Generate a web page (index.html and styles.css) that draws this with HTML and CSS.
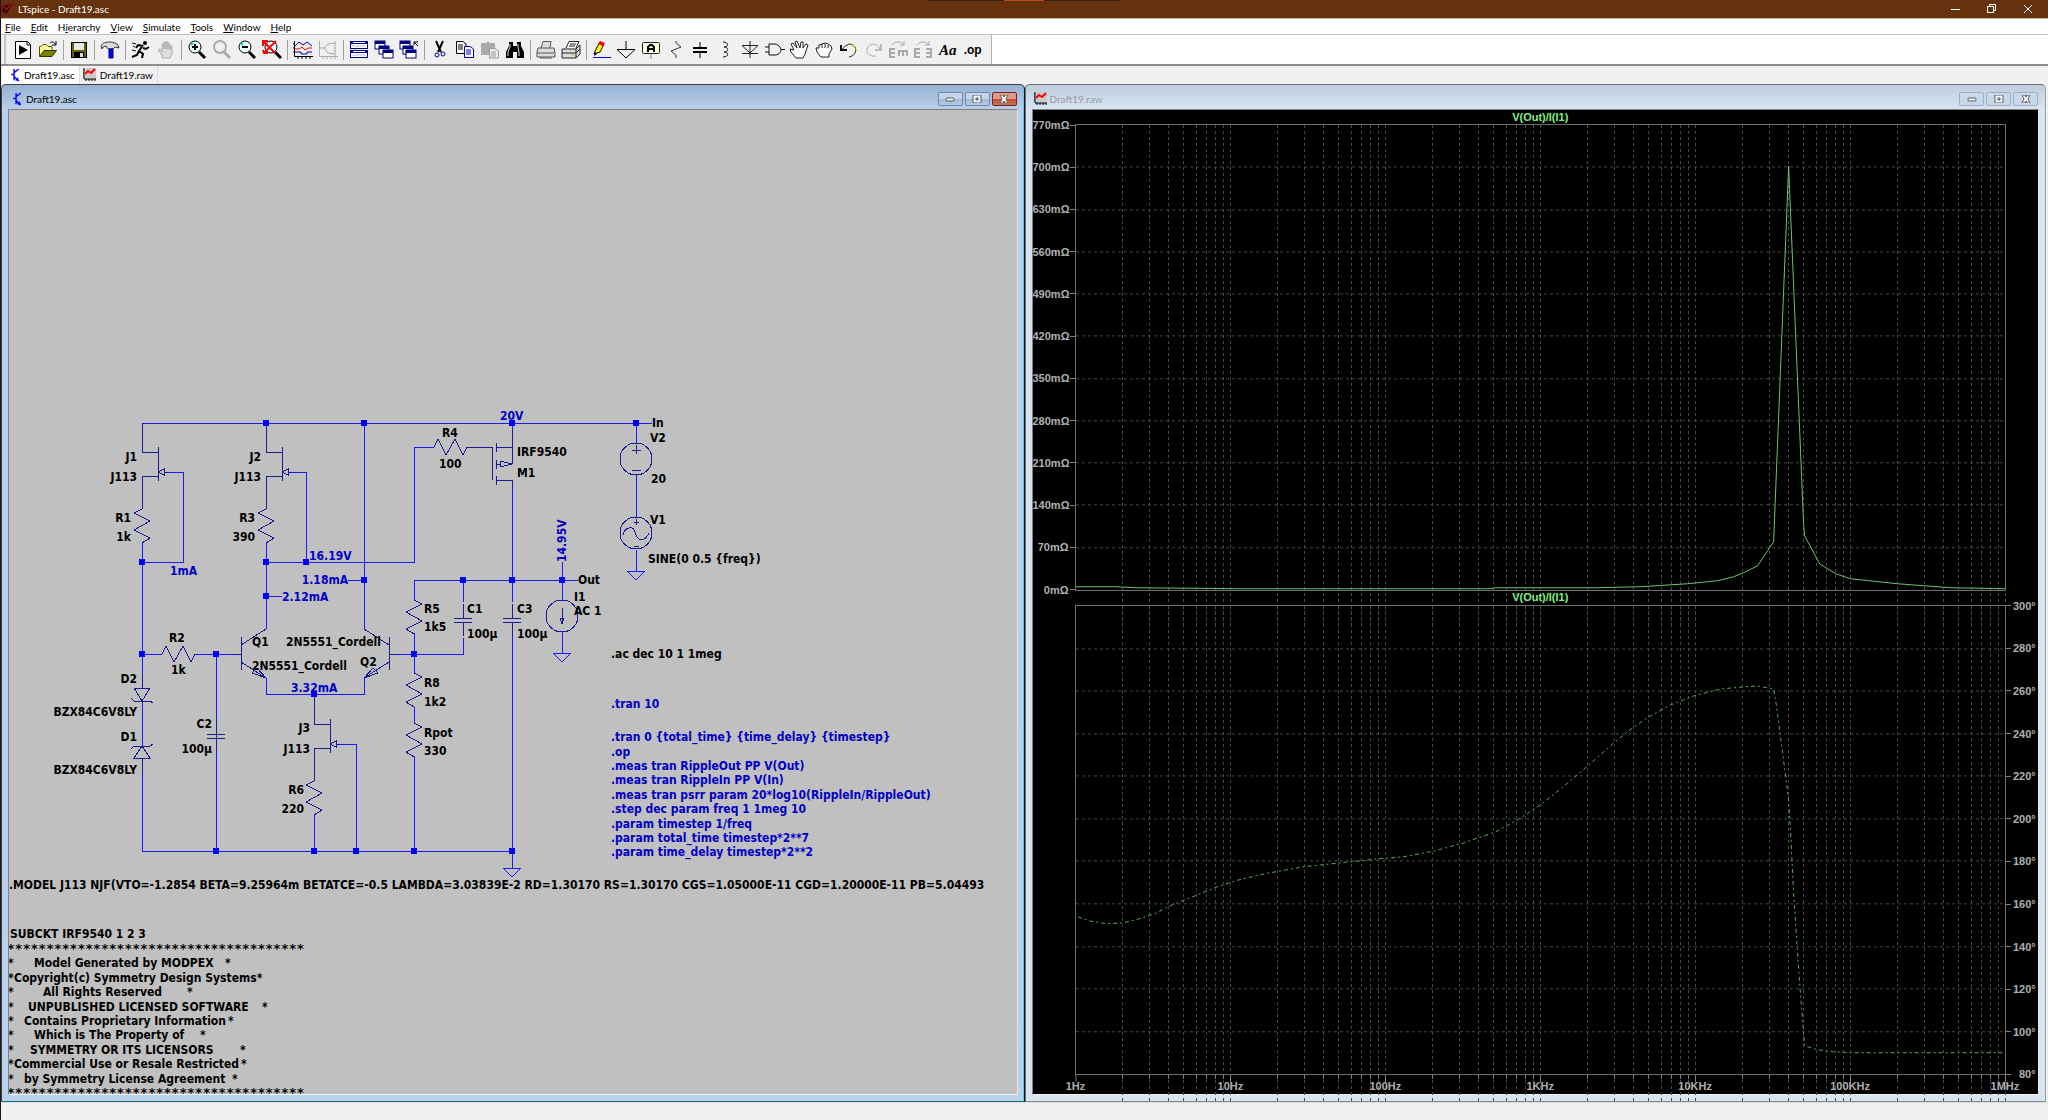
FILE: index.html
```html
<!DOCTYPE html>
<html lang="en">
<head>
<meta charset="utf-8">
<title>LTspice - Draft19.asc</title>
<link rel="stylesheet" href="styles.css">
</head>
<body>
<svg class="defs" aria-hidden="true">
  <defs>
    <path id="zig" d="M0 0L-8 4L8 12L-8 21L8 29L0 34"/>
    <path id="zig-r" d="M0 0L8 4L-8 12L8 21L-8 29L0 34"/>
    <path id="zig-h" d="M0 0L4 -8L12 8L21 -8L29 8L33 0"/>
    <path id="jfet" d="M0 0V29H16M16 24V58M0 86V53H16M16 49L22 46V52ZM22 49H25"/>
    <path id="gnd" d="M-9 0H9L0 9Z"/>
    <path id="cap" d="M-9 -2H9M-9 2H9M0 -16V-2M0 2V16"/>
    <rect id="dot" x="-3" y="-3" width="6" height="6"/>
    <path id="decade" d="M47 0V500M74 0V500M93 0V500M108 0V500M121 0V500M131 0V500M140 0V500M148 0V500M155 0V500"/>
    <path id="ticks" d="M47 0V4M74 0V4M93 0V4M108 0V4M121 0V4M131 0V4M140 0V4M148 0V4M155 0V7"/>
    <g id="bjt"><path d="M3 0V12M0 6H3M3 4L8 0M3 8L8 13" fill="none" stroke="#00f" stroke-width="1.500"/><path d="M8 13L4 12L7 9Z" fill="#00f"/></g>
    <g id="wave"><rect x="2" y="0" width="11" height="10" fill="#ccc"/><path d="M1 0V11H13M0 2H1M0 5H1M0 8H1M3 11V13M6 11V13M9 11V13M12 11V13" stroke="#000" fill="none"/><path d="M2 6L5 3L8 5L12 1" stroke="#f00" fill="none" stroke-width="2"/></g>
    <g id="winbox"><rect x="0" y="0" width="10" height="8" fill="#fff" stroke="#000080"/><rect x="0" y="0" width="10" height="3" fill="#000080"/></g>
  </defs>
</svg>

<header class="titlebar">
  <svg class="app-icon" width="14" height="14" viewBox="0 0 14 14"><path d="M1 4L12 1L6 12L1 10Z" fill="#2a0805" stroke="#8a1410"/><path d="M2 5L6 7L9 3M4 9L10 2" stroke="#d01818" fill="none"/></svg>
  <h1>LTspice - Draft19.asc</h1>
  <div class="caption-buttons">
    <button aria-label="Minimize"><svg width="10" height="10" viewBox="0 0 10 10"><path d="M0 5.500H9"/></svg></button>
    <button aria-label="Restore"><svg width="10" height="10" viewBox="0 0 10 10"><path d="M.5 2.500H6.500V8.500H.5ZM2.500 2.500V.5H8.500V6.500H6.500"/></svg></button>
    <button aria-label="Close"><svg width="10" height="10" viewBox="0 0 10 10"><path d="M1 1L9 9M9 1L1 9"/></svg></button>
  </div>
</header>

<nav class="menubar" aria-label="Main menu">
  <button><u>F</u>ile</button><button><u>E</u>dit</button><button>H<u>i</u>erarchy</button><button><u>V</u>iew</button><button><u>S</u>imulate</button><button><u>T</u>ools</button><button><u>W</u>indow</button><button><u>H</u>elp</button>
</nav>

<div class="toolrow">
<div class="toolbar" role="toolbar" aria-label="Tools">
  <div class="group">
    <button aria-label="New schematic"><svg viewBox="0 0 20 20"><path d="M2.500 1.500H14.500L17.500 4.500V18.500H2.500Z" fill="#fff" stroke="#000"/><path d="M14 2V5H17" fill="none" stroke="#000"/><path d="M6 5L15 10L6 15Z"/></svg></button>
    <button aria-label="Open"><svg viewBox="0 0 20 20"><path d="M1.500 16V6.500H3L5 4.500H8L10 6.500H14V10" fill="#ff9" stroke="#550"/><path d="M1.500 16.500L6 10.500H18.500L14 16.500Z" fill="#808000" stroke="#330"/><path d="M12 3C14 1 16 2 18 5M18 1V5H14" fill="none" stroke="#000"/></svg></button>
  </div>
  <div class="group">
    <button aria-label="Save"><svg viewBox="0 0 20 20"><rect x="2.500" y="2.500" width="15" height="15" fill="#666600" stroke="#000"/><rect x="5" y="3" width="10" height="7" fill="#e8e8e8"/><rect x="5" y="12" width="10" height="6"/><rect x="11" y="13" width="3" height="4" fill="#ddd"/></svg></button>
  </div>
  <div class="group">
    <button aria-label="Control panel"><svg viewBox="0 0 20 20"><path d="M1 6C3 2 9 1 15 3L18 5L19 8L15 7L13 9H8L6 6L3 7L2 9Z" fill="#ddd" stroke="#333"/><path d="M9 9H13V18H9Z" fill="#00f" stroke="#007"/></svg></button>
  </div>
  <div class="group">
    <button aria-label="Run"><svg viewBox="0 0 20 20"><circle cx="14" cy="3" r="2"/><path d="M12 5L8 11L12 14L11 18M8 11L6 15L1 17M12 6L7 5L5 8M12 8L15 9L18 7" fill="none" stroke="#000" stroke-width="2"/><path d="M1 3L5 4M2 6L4 7M1 10L5 11" stroke="#000"/></svg></button>
    <button aria-label="Halt"><svg viewBox="0 0 20 20"><path d="M6 18V15L2 10L4 9L6 12V4H8V9V2H10V9V2H12V9V4H14V10V6H16V14L14 18Z" fill="#ddd" stroke="#aaa"/></svg></button>
  </div>
  <div class="group">
    <button aria-label="Zoom in"><svg viewBox="0 0 20 20"><circle cx="8" cy="7" r="6" fill="#eff" stroke="#000"/><path d="M4 5L6 3" stroke="#0cc" stroke-width="2"/><path d="M8 4V10M5 7H11" stroke="#000" stroke-width="2"/><path d="M12 12L18 18" stroke="#000" stroke-width="3"/></svg></button>
    <button aria-label="Pan"><svg viewBox="0 0 20 20"><circle cx="8" cy="7" r="6" fill="#eee" stroke="#aaa" stroke-width="2"/><path d="M12 12L18 18" stroke="#aaa" stroke-width="3"/></svg></button>
    <button aria-label="Zoom back"><svg viewBox="0 0 20 20"><circle cx="8" cy="7" r="6" fill="#eff" stroke="#000"/><path d="M4 5L6 3" stroke="#0cc" stroke-width="2"/><path d="M5 7H11" stroke="#000" stroke-width="2"/><path d="M12 12L18 18" stroke="#000" stroke-width="3"/></svg></button>
    <button aria-label="Zoom full extents"><svg viewBox="0 0 20 20"><circle cx="9" cy="7" r="6" fill="#dff" stroke="#000"/><path d="M13 12L19 18" stroke="#000" stroke-width="3"/><path d="M1 1L13 13M14 1L2 13M1 6V1H6M1 10L2 13L6 13" fill="none" stroke="#f00" stroke-width="2"/></svg></button>
  </div>
  <div class="group">
    <button aria-label="Autorange"><svg viewBox="0 0 20 20"><path d="M1.500 1V16.500H20M0 4H1M0 8H1M0 12H1M5 17V19M9 17V19M13 17V19M17 17V19" stroke="#000" fill="none"/><path d="M2 6L6 2L10 5L14 2L19 6" stroke="#00a" fill="none"/><path d="M2 9H6L9 7L12 10L15 8H19" stroke="#f00" fill="none"/><path d="M2 12H8V14H14V12H19" stroke="#00a" fill="none"/></svg></button>
    <button aria-label="Pick visible traces"><svg viewBox="0 0 20 20"><path d="M1.500 1V16.500H20M5 17V19M9 17V19M13 17V19M17 17V19M17 1V16M17 3L10 4L6 8L10 13L17 14M2 8H7" stroke="#aaa" fill="none"/></svg></button>
  </div>
  <div class="group">
    <button aria-label="Tile windows"><svg viewBox="0 0 20 20"><path d="M1 1H19V9H1ZM1 10H19V18H1Z" fill="#000080"/><path d="M4 2H16V3H4ZM4 11H16V12H4ZM2 4H18V8H2ZM2 13H18V17H2Z" fill="#fff"/><path d="M3 5H17V7H3ZM3 14H17V16H3Z" fill="#dde"/></svg></button>
    <button aria-label="Cascade windows"><svg viewBox="0 0 20 20"><use href="#winbox" x="1" y="1"/><use href="#winbox" x="5" y="6"/><use href="#winbox" x="9" y="10"/></svg></button>
    <button aria-label="Close all windows"><svg viewBox="0 0 20 20"><use href="#winbox" x="1" y="1"/><use href="#winbox" x="4" y="6"/><use href="#winbox" x="7" y="10"/><path d="M19 6L15 2M15 5V2H19" stroke="#000" fill="none"/></svg></button>
  </div>
  <div class="group">
    <button aria-label="Cut"><svg viewBox="0 0 20 20"><path d="M6 1L11 12M13 1L8 12" stroke="#000" stroke-width="2"/><circle cx="7" cy="15" r="2" fill="none" stroke="#00a"/><circle cx="13" cy="14" r="2" fill="none" stroke="#00a"/></svg></button>
    <button aria-label="Copy"><svg viewBox="0 0 20 20"><path d="M1.500 1.500H8L11 4V13.500H1.500Z" fill="#fff" stroke="#000"/><path d="M3 5H8M3 7H8M3 9H8" stroke="#000"/><path d="M9.500 6.500H15L18.500 9V17.500H9.500Z" fill="#fff" stroke="#00a"/><path d="M11 10H16M11 12H16M11 14H16" stroke="#00a"/></svg></button>
    <button aria-label="Paste"><svg viewBox="0 0 20 20"><path d="M1 3H6L8 1L10 3H15V15H1Z" fill="#aaa"/><path d="M9.500 8.500H15L18.500 11V18H9.500Z" fill="#eee" stroke="#999"/><path d="M11 12H16M11 14H16M11 16H16" stroke="#999"/></svg></button>
    <button aria-label="Find"><svg viewBox="0 0 20 20"><path d="M4 2H8V6H12V2H16V6L19 12V18H12V12H8V18H1V12L4 6Z"/><path d="M5 4V7L3 12V16M13 4V7L14 12V16" stroke="#ddd" fill="none"/></svg></button>
  </div>
  <div class="group">
    <button aria-label="Print"><svg viewBox="0 0 20 20"><path d="M5 8L7 1.500H15L14 8M2 8H18L19 13V17H1V12Z" fill="#ddd" stroke="#555"/><path d="M1 13H18M4 17V18H16" stroke="#555" fill="none"/></svg></button>
    <button aria-label="Print preview"><svg viewBox="0 0 20 20"><path d="M5 8L8 1.500H18L15 8" fill="#fff" stroke="#222"/><path d="M9 4H15M8 6H14" stroke="#222"/><path d="M1 9H15L19 5V14L15 18H1Z" fill="#ddd" stroke="#222"/><path d="M1 13H15V18M15 13L19 9M15 9V13" stroke="#222" fill="none"/><path d="M10 15H13" stroke="#cc0"/></svg></button>
  </div>
  <div class="group edit">
    <button aria-label="Draw wire"><svg viewBox="0 0 20 20"><path d="M3 14L5 9L9 2L13 4L9 12Z" fill="#ff0" stroke="#000"/><path d="M9 1L14 3L12 6L7 4Z" fill="#f00"/><path d="M3 16L4 12L6 14Z"/><path d="M2 17.500H20" stroke="#00f"/></svg></button>
    <button aria-label="Ground"><svg viewBox="0 0 20 20"><path d="M10 1V9M1 9.500H19L10 18Z" fill="none" stroke="#000"/></svg></button>
    <button aria-label="Label net"><svg viewBox="0 0 20 20"><rect x="1.500" y="2.500" width="17" height="11" rx="1" fill="#ffd" stroke="#222"/><path d="M10 14V19" stroke="#888"/><path d="M7 12V7L9 5H11L13 7V12M7 9H13" fill="none" stroke="#000" stroke-width="2"/></svg></button>
    <button aria-label="Resistor"><svg viewBox="0 0 20 20"><path d="M10 1V3L15 7L5 11L10 15V18" fill="none" stroke="#333"/></svg></button>
    <button aria-label="Capacitor"><svg viewBox="0 0 20 20"><path d="M10 2V8M10 12V18" stroke="#000"/><path d="M3 8H17M3 12H17" fill="none" stroke="#000" stroke-width="2"/></svg></button>
    <button aria-label="Inductor"><svg viewBox="0 0 20 20"><path d="M8 2C14 2 14 7 9 7C14 7 14 12 9 12C14 12 14 17 8 17" fill="none" stroke="#111"/></svg></button>
    <button aria-label="Diode"><svg viewBox="0 0 20 20"><path d="M10 1V18M2 5.500H18L10 13ZM2 13.500H18" fill="none" stroke="#222"/></svg></button>
    <button aria-label="Component"><svg viewBox="0 0 20 20"><path d="M4 4H10C15 5 16 9 16 10C16 11 15 15 10 15H4ZM0 7H4M0 12H4M16 9.500H20" fill="none" stroke="#111"/></svg></button>
    <button aria-label="Move"><svg viewBox="0 0 20 20"><path d="M7 18L2 12L1 9L5 10L2 4L4 3L8 8L6 2L8 1L11 8L12 2L14 2L14 8L17 4L19 5L16 14L14 18Z" fill="#fff" stroke="#222"/></svg></button>
    <button aria-label="Drag"><svg viewBox="0 0 20 20"><path d="M7 17L3 12L2 8L5 8V5L8 4L11 3L14 4L17 6L18 9L15 14V17Z" fill="#fff" stroke="#222"/><path d="M8 4V8M11 4V8M14 5V8" stroke="#222"/></svg></button>
    <button aria-label="Undo"><svg viewBox="0 0 20 20"><path d="M3 10C7 3 13 3 16 7C18 12 15 16 10 17" fill="none" stroke="#222"/><path d="M9 4C14 3 17 7 17 11" fill="none" stroke="#aa0"/><path d="M2 5V10H8" fill="none" stroke="#111" stroke-width="2"/></svg></button>
    <button aria-label="Redo"><svg viewBox="0 0 20 20"><path d="M16 9C12 2 5 3 3 9C2 13 6 17 12 16" fill="none" stroke="#aaa"/><path d="M17 4V10H11" fill="none" stroke="#bbb" stroke-width="2"/></svg></button>
    <button aria-label="Rotate"><svg viewBox="0 0 20 20"><path d="M4 5C7 1 13 1 16 5M16 1V5H12" fill="none" stroke="#aaa"/><path d="M7 9H2V17H7M2 13H7M11 16V11H19V16M15 11V16" fill="none" stroke="#aaa" stroke-width="2"/></svg></button>
    <button aria-label="Mirror"><svg viewBox="0 0 20 20"><path d="M4 5C7 1 13 1 16 5M16 1V5H12" fill="none" stroke="#aaa"/><path d="M7 9H2V17H7M2 13H7M13 9H18V17H13M18 13H13" fill="none" stroke="#aaa" stroke-width="2"/></svg></button>
    <button class="text-tool serif" aria-label="Text">Aa</button>
    <button class="text-tool" aria-label="SPICE directive">.op</button>
  </div>
</div>
</div>

<div class="tabs" role="tablist">
  <button role="tab" aria-selected="true" class="active"><svg width="14" height="14" viewBox="-2 -1 12 15"><use href="#bjt"/></svg>Draft19.asc</button>
  <button role="tab" aria-selected="false"><svg width="14" height="14" viewBox="0 0 14 14"><use href="#wave"/></svg>Draft19.raw</button>
</div>

<main class="mdi">
  <section class="window front">
    <header>
      <svg width="14" height="14" viewBox="-2 -1 12 15"><use href="#bjt"/></svg>
      <h2>Draft19.asc</h2>
      <button aria-label="Minimize"><svg width="10" height="8" viewBox="0 0 10 8"><rect x="1" y="3" width="8" height="3" rx="1"/></svg></button>
      <button aria-label="Maximize"><svg width="10" height="8" viewBox="0 0 10 8"><path d="M1 0H9V8H1ZM4 3V5H6V3Z" fill-rule="evenodd"/></svg></button>
      <button class="close" aria-label="Close"><svg width="10" height="8" viewBox="0 0 10 8"><path d="M1 0H4L5 2L6 0H9L7 4L9 8H6L5 6L4 8H1L3 4Z"/></svg></button>
    </header>
    <div class="client schematic">
      <svg width="100%" height="100%" role="img" aria-label="Schematic">
        <g transform="translate(-9 -110)">
          <g class="wire">
            <path d="M142 423H652M142 423V441M266 423V441M364 423V629M512 423V441M636 423V443"/>
            <path d="M142 543V683M183 472V562H142M164 472H183M266 543V629M288 472H306V562M266 562H414V447H434M266 596H282M348 580H364"/>
            <path d="M142 654H162M195 654H233M216 654V851M142 701V746M142 767V851H512M266 678V694H364V678M314 694V705M339 744H356V851M314 814V851"/>
            <path d="M397 654H463V638M414 633V673M414 707V723M414 756V851M414 600V580H578M463 580V602M512 488V602M512 636V868M562 562V600M562 632V653M636 475V517M636 550V571"/>
            <use href="#gnd" x="512" y="868"/><use href="#gnd" x="562" y="653"/><use href="#gnd" x="636" y="571"/>
          </g>
          <g class="part">
            <use href="#jfet" x="142" y="423"/><use href="#jfet" x="266" y="423"/><use href="#jfet" x="314" y="695"/>
            <use href="#zig" x="142" y="509"/><use href="#zig" x="266" y="509"/><use href="#zig" x="314" y="781"/>
            <use href="#zig-r" x="414" y="600"/><use href="#zig-r" x="414" y="673"/><use href="#zig-r" x="414" y="723"/>
            <use href="#zig-h" x="162" y="654"/><use href="#zig-h" x="434" y="447"/>
            <use href="#cap" x="216" y="736"/><use href="#cap" x="463" y="620"/><use href="#cap" x="512" y="620"/>
            <path d="M467 447H492V480M496 443V452M496 460V469M496 476V485M496 447H512V430M512 447V464M512 464L500 461V467ZM500 464H496M496 480H512V488"/>
            <path d="M233 654H241M241 637V670M241 645L266 629M241 662L266 678M266 678L252 673L257 668Z"/>
            <path d="M397 654H389M389 637V670M389 645L364 629M389 662L364 678M364 678L378 673L373 668Z"/>
            <path d="M142 675V688M134 688H150L142 701ZM131 698L134 701H150L153 703M142 771V758M134 758H150L142 746ZM131 749L134 746H150L153 744"/>
            <circle cx="636" cy="459" r="16"/><circle cx="636" cy="533" r="16"/><circle cx="562" cy="616" r="16"/>
            <path d="M632 450H641M636 445V454M632 470H641M634 522H639M636 519V525M634 546H639"/>
            <path d="M623 535C625 527 633 525 635 532C637 541 644 543 649 533"/>
            <path d="M562 608V624M560 618H564L562 624Z"/>
          </g>
          <g class="dots">
            <use href="#dot" x="266" y="423"/><use href="#dot" x="364" y="423"/><use href="#dot" x="512" y="423"/><use href="#dot" x="636" y="423"/>
            <use href="#dot" x="142" y="562"/><use href="#dot" x="266" y="562"/><use href="#dot" x="306" y="562"/><use href="#dot" x="364" y="580"/><use href="#dot" x="266" y="596"/>
            <use href="#dot" x="142" y="654"/><use href="#dot" x="216" y="654"/><use href="#dot" x="414" y="654"/>
            <use href="#dot" x="463" y="580"/><use href="#dot" x="512" y="580"/><use href="#dot" x="562" y="580"/><use href="#dot" x="314" y="694"/>
            <use href="#dot" x="216" y="851"/><use href="#dot" x="314" y="851"/><use href="#dot" x="356" y="851"/><use href="#dot" x="414" y="851"/><use href="#dot" x="512" y="851"/>
          </g>
          <g class="end">
            <text x="137" y="461">J1</text><text x="137" y="481">J113</text><text x="131" y="522">R1</text><text x="131" y="541">1k</text>
            <text x="261" y="461">J2</text><text x="261" y="481">J113</text><text x="255" y="522">R3</text><text x="255" y="541">390</text>
            <text x="137" y="683">D2</text><text x="137" y="716">BZX84C6V8LY</text><text x="137" y="741">D1</text><text x="137" y="774">BZX84C6V8LY</text>
            <text x="212" y="728">C2</text><text x="212" y="753">100µ</text><text x="310" y="732">J3</text><text x="310" y="753">J113</text>
            <text x="304" y="794">R6</text><text x="304" y="813">220</text>
            <text x="381" y="646">2N5551_Cordell</text><text x="347" y="670">2N5551_Cordell</text>
            <text class="note" x="348" y="584">1.18mA</text>
          </g>
          <g>
            <text x="252" y="646">Q1</text><text x="360" y="666">Q2</text><text x="169" y="642">R2</text><text x="171" y="674">1k</text>
            <text x="442" y="437">R4</text><text x="439" y="468">100</text><text x="517" y="456">IRF9540</text><text x="517" y="477">M1</text>
            <text x="652" y="427">In</text><text x="650" y="442">V2</text><text x="651" y="483">20</text><text x="650" y="524">V1</text><text x="648" y="563">SINE(0 0.5 {freq})</text>
            <text x="578" y="584">Out</text><text x="574" y="601">I1</text><text x="574" y="615">AC 1</text>
            <text x="424" y="613">R5</text><text x="424" y="631">1k5</text><text x="467" y="613">C1</text><text x="467" y="638">100µ</text><text x="517" y="613">C3</text><text x="517" y="638">100µ</text>
            <text x="424" y="687">R8</text><text x="424" y="706">1k2</text><text x="424" y="737">Rpot</text><text x="424" y="755">330</text>
            <text x="611" y="658">.ac dec 10 1 1meg</text>
          </g>
          <g class="note">
            <text x="170" y="575">1mA</text><text x="309" y="560">16.19V</text><text x="282" y="601">2.12mA</text><text x="291" y="692">3.32mA</text><text x="500" y="420">20V</text>
            <text transform="translate(566 562) rotate(-90)">14.95V</text>
            <text x="611" y="708">.tran 10</text>
            <text x="611" y="741">.tran 0 {total_time} {time_delay} {timestep}</text>
            <text x="611" y="756">.op</text>
            <text x="611" y="770">.meas tran RippleOut PP V(Out)</text>
            <text x="611" y="784">.meas tran RippleIn PP V(In)</text>
            <text x="611" y="799">.meas tran psrr param 20*log10(RippleIn/RippleOut)</text>
            <text x="611" y="813">.step dec param freq 1 1meg 10</text>
            <text x="611" y="828">.param timestep 1/freq</text>
            <text x="611" y="842">.param total_time timestep*2**7</text>
            <text x="611" y="856">.param time_delay timestep*2**2</text>
          </g>
          <g>
            <text x="9" y="889">.MODEL J113 NJF(VTO=-1.2854 BETA=9.25964m BETATCE=-0.5 LAMBDA=3.03839E-2 RD=1.30170 RS=1.30170 CGS=1.05000E-11 CGD=1.20000E-11 PB=5.04493</text>
            <text x="10" y="938">SUBCKT IRF9540 1 2 3</text>
            <text class="rule" x="7" y="953">**************************************</text>
            <text x="8" y="967">*<tspan x="34">Model Generated by MODPEX</tspan><tspan x="225">*</tspan></text>
            <text x="8" y="982">*<tspan x="14">Copyright(c) Symmetry Design Systems*</tspan></text>
            <text x="8" y="996">*<tspan x="43">All Rights Reserved</tspan><tspan x="187">*</tspan></text>
            <text x="8" y="1011">*<tspan x="28">UNPUBLISHED LICENSED SOFTWARE</tspan><tspan x="262">*</tspan></text>
            <text x="8" y="1025">*<tspan x="24">Contains Proprietary Information</tspan><tspan x="228">*</tspan></text>
            <text x="8" y="1039">*<tspan x="34">Which is The Property of</tspan><tspan x="200">*</tspan></text>
            <text x="8" y="1054">*<tspan x="30">SYMMETRY OR ITS LICENSORS</tspan><tspan x="240">*</tspan></text>
            <text x="8" y="1068">*<tspan x="14">Commercial Use or Resale Restricted</tspan><tspan x="241">*</tspan></text>
            <text x="8" y="1083">*<tspan x="24">by Symmetry License Agreement</tspan><tspan x="232">*</tspan></text>
            <text class="rule" x="7" y="1097">**************************************</text>
          </g>
        </g>
      </svg>
    </div>
  </section>

  <section class="window back">
    <header>
      <svg width="14" height="14" viewBox="0 0 14 14"><use href="#wave"/></svg>
      <h2>Draft19.raw</h2>
      <button aria-label="Minimize"><svg width="10" height="8" viewBox="0 0 10 8"><rect x="1" y="3" width="8" height="3" rx="1"/></svg></button>
      <button aria-label="Maximize"><svg width="10" height="8" viewBox="0 0 10 8"><path d="M1 0H9V8H1ZM4 3V5H6V3Z" fill-rule="evenodd"/></svg></button>
      <button aria-label="Close"><svg width="10" height="8" viewBox="0 0 10 8"><path d="M1 0H4L5 2L6 0H9L7 4L9 8H6L5 6L4 8H1L3 4Z"/></svg></button>
    </header>
    <div class="client plots">
      <h3>V(Out)/I(I1)</h3>
      <ol class="axis left">
        <li>770mΩ</li><li>700mΩ</li><li>630mΩ</li><li>560mΩ</li><li>490mΩ</li><li>420mΩ</li><li>350mΩ</li><li>280mΩ</li><li>210mΩ</li><li>140mΩ</li><li>70mΩ</li><li>0mΩ</li>
      </ol>
      <svg class="plot" viewBox="0 0 930 465" preserveAspectRatio="none" role="img" aria-label="Impedance magnitude">
        <g class="grid">
          <use href="#decade"/><use href="#decade" x="155"/><use href="#decade" x="310"/><use href="#decade" x="465"/><use href="#decade" x="620"/><use href="#decade" x="775"/>
          <path d="M0 42H930M0 85H930M0 127H930M0 169H930M0 211H930M0 254H930M0 296H930M0 338H930M0 380H930M0 423H930"/>
        </g>
        <path class="trace" d="M0 462H39L60 463L165 464H415L420 463H520L565 462L612 459L642 456L658 452L668 448L682 441L692 426L698 417L713 41L728 400L729 411L744 439L760 449L775 454L822 459L875 463L930 464"/>
      </svg>
      <h3>V(Out)/I(I1)</h3>
      <svg class="plot phase" viewBox="0 0 930 469" preserveAspectRatio="none" role="img" aria-label="Impedance phase">
        <g class="grid">
          <use href="#decade"/><use href="#decade" x="155"/><use href="#decade" x="310"/><use href="#decade" x="465"/><use href="#decade" x="620"/><use href="#decade" x="775"/>
          <path d="M0 43H930M0 85H930M0 128H930M0 170H930M0 213H930M0 255H930M0 298H930M0 341H930M0 383H930M0 426H930"/>
        </g>
        <g class="ticks" transform="translate(0 469)"><path d="M0 0V7"/><use href="#ticks"/><use href="#ticks" x="155"/><use href="#ticks" x="310"/><use href="#ticks" x="465"/><use href="#ticks" x="620"/><use href="#ticks" x="775"/></g>
        <path class="trace dotted" d="M2 311L13 315L31 318L47 317L63 313L81 307L94 300L109 294L124 288L141 281L163 274L188 268L227 261L274 256L302 253L327 251L359 245L388 237L420 226L445 212L466 198L485 183L512 160L538 137L558 121L573 111L595 99L618 90L645 83L667 81L682 80L698 83L701 101L707 147L713 194L715 227L718 287L724 377L728 427L729 440L742 444L758 446L775 447H930"/>
      </svg>
      <ol class="axis right">
        <li>300°</li><li>280°</li><li>260°</li><li>240°</li><li>220°</li><li>200°</li><li>180°</li><li>160°</li><li>140°</li><li>120°</li><li>100°</li><li>80°</li>
      </ol>
      <ol class="axis freq">
        <li>1Hz</li><li>10Hz</li><li>100Hz</li><li>1KHz</li><li>10KHz</li><li>100KHz</li><li>1MHz</li>
      </ol>
    </div>
  </section>
</main>
<footer class="status"></footer>
</body>
</html>
```
FILE: styles.css
```css
* { box-sizing: border-box; }
html, body { height: 100%; }
body {
  margin: 0;
  display: flex;
  flex-direction: column;
  border-left: 1px solid #15171c;
  background: #f0f0f0;
  font: 10px/14px "Lato", "Open Sans", sans-serif;
  color: #000;
  overflow: hidden;
}
h1, h2, h3, ol { margin: 0; padding: 0; font: inherit; list-style: none; }
button { padding: 0; border: 0; background: none; font: inherit; color: inherit; }
.defs { position: absolute; width: 0; height: 0; }

.titlebar {
  height: 19px;
  flex: none;
  display: flex;
  align-items: center;
  gap: 3px;
  border-bottom: 1px solid #c9b3a1;
  background:
    linear-gradient(#30261e, #30261e) 927px 0 / 76px 1px no-repeat,
    linear-gradient(#b04a20, #b04a20) 1003px 0 / 40px 1px no-repeat,
    linear-gradient(#30261e, #30261e) 1043px 0 / 76px 1px no-repeat,
    #66320e;
  color: #fff;
}
.titlebar h1 { flex: 1; }
.caption-buttons { display: flex; margin-right: 2px; }
.caption-buttons button { width: 36px; height: 16px; display: grid; place-items: center; }
.caption-buttons svg { fill: none; stroke: #fff; }

.menubar {
  height: 15px;
  flex: none;
  display: flex;
  align-items: center;
  gap: 10px;
  padding-left: 4px;
  background: #fff;
}
.toolrow {
  height: 32px;
  flex: none;
  background: #fff;
  border-top: 1px solid #c0c0c0;
  border-bottom: 2px solid #8e8e8e;
}
.toolbar {
  width: max-content;
  height: 29px;
  display: flex;
  align-items: center;
  padding-left: 9px;
  border-right: 1px solid #b0b0b0;
  background: linear-gradient(90deg, transparent 3px, #c4c4c4 3px, #c4c4c4 5px, transparent 5px), #f0f0f0;
}
.group { display: flex; }
.group + .group { border-left: 1px solid #a0a0a0; margin-left: 3px; padding-left: 2px; }
.group button { width: 25px; height: 20px; display: grid; place-items: center; }
.group svg { width: 20px; height: 20px; }
.group.edit { width: 405px; padding-right: 6px; }
.group.edit button { flex: 1; }
.text-tool { font: bold 12px/20px "Liberation Sans", sans-serif; }
.text-tool.serif { font: italic bold 15px/20px "Liberation Serif", serif; }

.tabs { height: 18px; flex: none; display: flex; padding-left: 1px; background: #f0f0f0; }
.tabs button {
  display: flex;
  align-items: center;
  gap: 2px;
  padding: 0 4px 0 6px;
  border-right: 1px solid #dcdcdc;
}
.tabs button + button { padding-left: 3px; gap: 3px; }
.tabs .active { background: #fff; }

.mdi { flex: 1; min-height: 0; display: grid; grid-template-columns: 1fr 1fr; }
.window {
  min-width: 0;
  display: flex;
  flex-direction: column;
  padding: 0 6px 6px;
  border: 1px solid #3e434a;
  border-radius: 5px 5px 0 0;
}
.window.front {
  border-color: #3e434a #10151a #18707a #3e434a;
  background: linear-gradient(#98b0d2, #b8d0ea 24px, #b9d1ea);
  box-shadow: inset -1px 0 #5ec8e8;
}
.window.back { border-color: #6a6e76 #9a9a9a #8a8a8a #6a6e76; background: linear-gradient(#bfcddd, #d7e4f2 24px); margin-right: 2px; }
.window header { height: 24px; flex: none; display: flex; align-items: center; padding: 3px 1px 0 2px; }
.window h2 { flex: 1; padding-left: 2px; }
.back h2 { color: #9a9ca0; }
.window header button {
  width: 25px;
  height: 14px;
  margin-left: 2px;
  display: grid;
  place-items: center;
  border: 1px solid #7089a8;
  border-radius: 2px;
  background: linear-gradient(#c4d6ea 50%, #9fb9d6 50%, #b5cbe2);
}
.window header button rect, .window header button path { fill: #f4f4f4; stroke: #555c66; }
.window header .close { background: linear-gradient(#e09a8c 50%, #c04a32 50%, #d0705a); border-color: #6a2a22; }
.window.back header button { background: #c9d8e8; border-color: #9cb0c6; }
.client { flex: 1; min-height: 0; border: 1px solid #808080; border-right-color: #e8e8e8; border-bottom-color: #f4f4f4; }

.schematic { background: #c0c0c0; overflow: hidden; }
.schematic > svg { display: block; }
.schematic text { font: bold 12px "DejaVu Sans Condensed", "DejaVu Sans", sans-serif; white-space: pre; fill: #000; }
.schematic .note text, .schematic text.note { fill: #0000c8; }
.schematic text.rule { font: bold 13px "DejaVu Sans Mono", "Liberation Mono", monospace; }
.end text { text-anchor: end; }
.wire, .part { fill: none; stroke: #1a1aff; stroke-width: 1; shape-rendering: crispEdges; }
.part { stroke: #1c1c90; }
.dots { fill: #00f; }

.plots {
  display: grid;
  grid-template-columns: 43px 1fr 33px;
  grid-template-rows: 15px 465fr 16px 469fr 20px;
  background: #000;
  color: #b0b0b0;
  font: bold 11px/14px "Liberation Sans", Arial, sans-serif;
}
.plots h3 { grid-column: 2; justify-self: center; color: #80f080; }
.plot {
  grid-column: 2;
  width: 100%;
  height: 100%;
  min-height: 0;
  overflow: visible;
  outline: 1px solid #707070;
}
.plot * { vector-effect: non-scaling-stroke; }
.grid, .ticks { fill: none; shape-rendering: crispEdges; stroke: #484848; stroke-dasharray: 3 3; }
.ticks { stroke: #808080; stroke-dasharray: none; }
.trace { fill: none; stroke: #6cc46c; stroke-width: 1; }
.dotted { stroke: #58a858; stroke-dasharray: 4 3 2 3; }
.axis { display: flex; flex-direction: column; justify-content: space-between; }
.axis li { display: flex; align-items: center; justify-content: flex-end; gap: 1px; white-space: nowrap; }
.axis.left, .axis.right { margin: -7px 0; }
.axis.left { grid-area: 2 / 1; }
.axis.right { grid-area: 4 / 3; }
.axis.left li::after, .axis.right li::before { content: ""; width: 6px; height: 1px; background: #808080; }
.axis.right li { justify-content: flex-start; gap: 2px; }
.axis.right li:last-child { gap: 8px; }
.axis.freq { grid-area: 5 / 2; flex-direction: row; align-items: flex-end; padding-bottom: 1px; }
.axis.freq li { width: 0; justify-content: center; }

.status { height: 18px; flex: none; border-top: 1px solid #dcdcdc; background: #f0f0f0; }
```
